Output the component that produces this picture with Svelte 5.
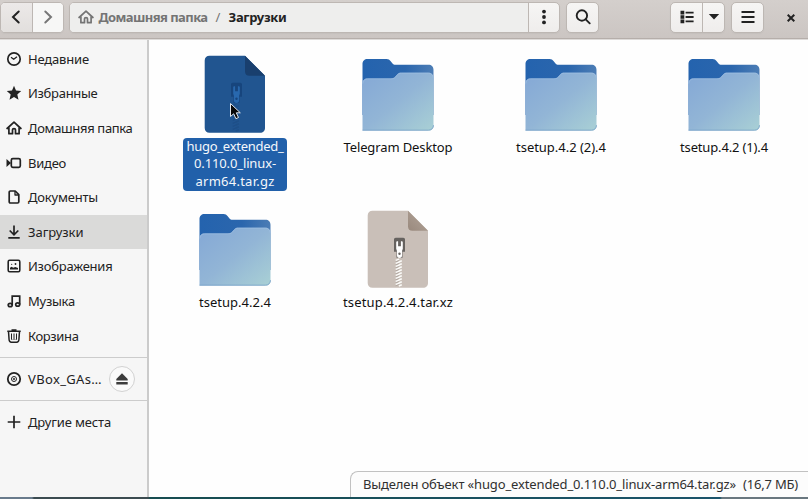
<script>
  const places = [
    { icon: 'clock', label: 'Недавние', w: 61 },
    { icon: 'star', label: 'Избранные', w: 69.5 },
    { icon: 'home', label: 'Домашняя папка', w: 104.5 },
    { icon: 'video', label: 'Видео', w: 38 },
    { icon: 'doc', label: 'Документы', w: 70 },
    { icon: 'down', label: 'Загрузки', w: 55.5, active: true },
    { icon: 'image', label: 'Изображения', w: 84.5 },
    { icon: 'music', label: 'Музыка', w: 47 },
    { icon: 'trash', label: 'Корзина', w: 50.5 }
  ];
  const files = [
    { kind: 'selected', lines: [['hugo_extended_', 97], ['0.110.0_linux-', 82], ['arm64.tar.gz', 79]] },
    { kind: 'folder', lines: [['Telegram Desktop', 109]] },
    { kind: 'folder', lines: [['tsetup.4.2 (2).4', 90]] },
    { kind: 'folder', lines: [['tsetup.4.2 (1).4', 88]] },
    { kind: 'folder', lines: [['tsetup.4.2.4', 72]] },
    { kind: 'archive', lines: [['tsetup.4.2.4.tar.xz', 110]] }
  ];

  // Tracks a label so that it fills the given width.
  function fit(node, width) {
    node.style.letterSpacing = '0px';
    const natural = node.getBoundingClientRect().width;
    const gap = (width - natural) / node.textContent.length;
    node.style.letterSpacing = gap.toFixed(3) + 'px';
  }
</script>

{#snippet glyph(name)}
  <svg class="glyph" viewBox="0 0 16 16" width="16" height="16" fill="none" stroke="currentColor" stroke-width="1.7" stroke-linejoin="round">
    {#if name === 'clock'}
      <circle cx="8" cy="8" r="6.2" stroke-width="1.7" /><path d="M5 6.300 7.700 8.300 11 5.700" stroke-width="1.300" />
    {:else if name === 'star'}
      <path d="m8 .8 2 4.700 5.200.500-3.900 3.400 1.200 5.300L8 11.900l-4.500 2.800 1.200-5.300L.8 6 6 5.500Z" fill="currentColor" stroke="none" />
    {:else if name === 'home'}
      <path d="M1.100 8.500 8 2.200l6.900 6.300" stroke-linecap="round" /><path d="M2.900 7.500v6.200h3.600V9.800c0-1.600 3-1.600 3 0v3.900h3.600V7.500" />
    {:else if name === 'video'}
      <rect x="5.300" y="3.700" width="9" height="8.600" rx="1.500" /><path d="M.5 4v8L5 8Z" fill="currentColor" stroke="none" />
    {:else if name === 'doc'}
      <path d="M3.200 3.200c0-.8.400-1.200 1.200-1.200h4.800l3.600 3.700v7.100c0 .800-.4 1.200-1.200 1.200H4.400c-.8 0-1.200-.4-1.200-1.200Z" /><path d="M9 2v4h4" stroke-width="1.300" />
    {:else if name === 'down'}
      <path d="M8 1.500v9M3.700 6.500 8 10.800l4.300-4.300M2.300 13.900h11.400" stroke-linejoin="miter" />
    {:else if name === 'image'}
      <rect x="2.200" y="2.300" width="11.600" height="11.400" rx="1.400" stroke-width="1.600" /><path d="M4 11.600V9.700l1.700-.9 1.500.9 2-.7 2.800 1v1.600Z" fill="currentColor" stroke="none" /><circle cx="9.500" cy="6" r=".9" fill="currentColor" stroke="none" /><circle cx="5.700" cy="6.300" r=".6" fill="currentColor" stroke="none" />
    {:else if name === 'music'}
      <path d="M6.200 12V3.200h7.500v8.300M6.200 3.200h7.500" stroke-linejoin="miter" /><ellipse cx="4.200" cy="12" rx="2" ry="1.700" /><ellipse cx="11.700" cy="11.500" rx="2" ry="1.700" />
    {:else if name === 'trash'}
      <path d="M1.300 3.300h13.400M5.500 1.900h5" stroke-width="1.500" /><path d="m2.500 3.500.6 8.300c.1 1.500.9 2.400 2.300 2.400h5.200c1.400 0 2.200-.9 2.300-2.400l.6-8.300" stroke-width="1.500" /><path d="M5.500 5.500v5.500l.6 1M8 5.500v6.500M10.500 5.500v5.500l-.6 1" stroke-width="1" />
    {:else if name === 'disc'}
      <circle cx="8" cy="8" r="6.200" stroke-width="1.800" /><circle cx="8" cy="8" r="2.500" stroke-width="1" /><circle cx="8" cy="8" r="1" fill="currentColor" stroke="none" />
    {:else if name === 'plus'}
      <path d="M8 1.700v12.600M1.700 8h12.600" />
    {/if}
  </svg>
{/snippet}

<div class="window">
  <header>
    <div class="group nav">
      <button class="back" aria-label="Назад"><svg width="16" height="16" viewBox="0 0 16 16"><path d="M10.700 2.500 5 8l5.700 5.500" fill="none" stroke="#222" stroke-width="2" stroke-linecap="round" /></svg></button>
      <button class="fwd" aria-label="Вперёд"><svg width="16" height="16" viewBox="0 0 16 16"><path d="M5.300 2.500 11 8l-5.700 5.500" fill="none" stroke="#777" stroke-width="2" stroke-linecap="round" /></svg></button>
    </div>
    <div class="group path">
      <div class="crumbs">
        {@render glyph('home')}
        <b class="muted" use:fit={109}>Домашняя папка</b>
        <span class="slash">/</span>
        <b class="current" use:fit={58}>Загрузки</b>
      </div>
      <button class="dots" aria-label="Действия"><svg width="6" height="16" viewBox="0 0 6 16" fill="#222"><circle cx="3" cy="2.600" r="1.900" /><circle cx="3" cy="8" r="1.900" /><circle cx="3" cy="13.400" r="1.900" /></svg></button>
    </div>
    <div class="group search">
      <button aria-label="Поиск"><svg width="16" height="16" viewBox="0 0 16 16" fill="none" stroke="#222" stroke-width="1.900"><circle cx="6.900" cy="6.500" r="5.200" /><path d="m10.700 10.300 4 4" stroke-linecap="round" /></svg></button>
    </div>
    <span class="spacer"></span>
    <div class="group view">
      <button class="list" aria-label="Список"><svg width="14" height="14" viewBox="0 0 14 14" fill="#222"><path d="M.5.800h3.800v3.600H.5zM.5 5.200h3.800v3.600H.5zM.5 9.600h3.800v3.600H.5zM5.600 1.700h8v1.800h-8zM5.600 6.100h8v1.800h-8zM5.600 10.500h8v1.800h-8z" /></svg></button>
      <button class="drop" aria-label="Вид"><svg width="12" height="6" viewBox="0 0 12 6"><path d="M.8 0h10.400L6 5.500Z" fill="#222" /></svg></button>
    </div>
    <div class="group menu">
      <button aria-label="Меню"><svg width="14" height="12" viewBox="0 0 14 12"><path d="M.5 1h13M.5 6h13M.5 11h13" stroke="#222" stroke-width="1.900" /></svg></button>
    </div>
    <svg class="close" width="8" height="8" viewBox="0 0 8 8"><path d="m.7.700 6.600 6.600M7.300.700.7 7.300" stroke="#222" stroke-width="2" /></svg>
  </header>

  <div class="body">
    <aside>
      <div class="places">
        {#each places as p}
          <div class="place" class:active={p.active}>
            {@render glyph(p.icon)}<span use:fit={p.w}>{p.label}</span>
          </div>
        {/each}
      </div>
      <div class="place mount">
        {@render glyph('disc')}<span use:fit={74}>VBox_GAs…</span>
        <div class="eject"><svg width="12" height="12" viewBox="0 0 12 12" fill="#3c3c3c"><path d="M6 .3 11.700 6v1.500H.3V6ZM.3 9h11.400v2.500H.3z" /></svg></div>
      </div>
      <div class="place other">{@render glyph('plus')}<span use:fit={83}>Другие места</span></div>
    </aside>

    <main>
      <svg class="defs" width="0" height="0">
        <linearGradient id="back" x1="0" y1="0" x2="1" y2="0"><stop offset="0" stop-color="#2463ae" /><stop offset=".6" stop-color="#2b66ad" /><stop offset="1" stop-color="#4c7db5" /></linearGradient>
        <linearGradient id="front" x1="0" y1="0" x2="1" y2="1"><stop offset="0" stop-color="#84a8d6" /><stop offset=".5" stop-color="#92b5d6" /><stop offset="1" stop-color="#a9d0d5" /></linearGradient>
        <linearGradient id="fold" x1="0" y1="1" x2="1" y2="0"><stop offset="0" stop-color="#99897d" /><stop offset="1" stop-color="#b5a79c" /></linearGradient>
      </svg>
      <div class="grid">
        {#each files as f}
          <div class="item">
            {#if f.kind === 'folder'}
              <svg width="72" height="80" viewBox="0 0 72 80">
                <path d="M.5 72V9c0-3 2-5 5-5h19c2 0 3 .7 4 2l2 2.500c.7.900 1.500 1.200 3 1.200h33c3 0 5 2 5 5V60H.5Z" fill="url(#back)" />
                <path d="M.5 75.500V28.500c0-3 2-5 5-5H29c2 0 3-.5 4.200-1.700l2-2.300c1-1.200 2-1.700 4-1.700h27.300c3 0 5 2 5 5v47.700c0 3-2 5-5 5Z" fill="url(#front)" />
                <path d="M.8 28.500c0-3 2-4.700 4.700-4.700H29c2 0 3.300-.6 4.400-1.800l2-2.300c1-1.200 2-1.600 3.800-1.600h27.300c2.700 0 4.700 2 4.700 4.700" fill="none" stroke="#a0c0e3" stroke-width=".7" />
                <path d="M.5 75.200h66c3 0 5-2 5-5" fill="none" stroke="#719dc5" stroke-width=".8" />
              </svg>
            {:else}
              {@const sel = f.kind === 'selected'}
              <svg class="file" width="62" height="80" viewBox="0 0 62 80">
                <path d="M.7 5.500C.7 2.700 2.700.700 5.500.700H41l20 20v52.300c0 2.800-2 4.800-4.800 4.800H5.500c-2.800 0-4.800-2-4.800-4.800Z" fill={sel ? '#215590' : '#c9bfb8'} />
                <path d="M41 .7 61 20.700H45.500c-3 0-4.500-1.500-4.500-4.500Z" fill={sel ? '#193f6e' : 'url(#fold)'} />
                {#each Array(9) as _, i}
                  <path d="M28.700 {50.500 + i * 3}l3.500-1.200M31.800 {52 + i * 3}l3-1.200" stroke={sel ? '#1e4f88' : '#fbfbf9'} stroke-width="1.500" />
                  <path d="M28.700 {51.600 + i * 3}l3.500-1.200" stroke={sel ? '#225894' : '#91877e'} stroke-width=".5" />
                {/each}
                <path d="M27 29.500c0-1 .7-1.700 1.700-1.700h7.600c1 0 1.700.7 1.700 1.700v12.300h-2.500v6h-6v-6H27Z" fill={sel ? '#17457d' : '#66625f'} />
                <path d="M29.200 32.500c0-.8.5-1.300 1.200-1.300h.7v5h2.800v-5h.7c.7 0 1.200.5 1.200 1.300v6.300l-.7 2v4.500c0 1.700-1 2.600-2.600 2.600s-2.600-.9-2.600-2.600v-4.500l-.7-2Z" fill={sel ? '#2868ae' : '#fff'} />
                <circle cx="32.500" cy="43.700" r="1.200" fill={sel ? '#17457d' : '#66625f'} />
              </svg>
            {/if}
            <div class="label" class:picked={f.kind === 'selected'}>
              {#each f.lines as [text, w]}<div><span use:fit={w}>{text}</span></div>{/each}
            </div>
          </div>
        {/each}
      </div>
      <svg class="cursor" width="14" height="20" viewBox="0 0 14 20"><path d="M1.500 1.500v13l3.200-2.700 2.200 4.900 2.600-1.200-2.200-4.700h4Z" fill="#080808" stroke="#e5e9ee" stroke-width="1" /></svg>
      <div class="status"><span use:fit={373}>Выделен объект «hugo_extended_0.110.0_linux-arm64.tar.gz»</span><span use:fit={55}>(16,7 МБ)</span></div>
    </main>
  </div>
  <footer></footer>
</div>

<style>
  .window { width: 808px; height: 499px; display: flex; flex-direction: column; overflow: hidden; font: 13px/18px "Noto Sans", "Open Sans", sans-serif; color: #222; background: #fefefe; white-space: nowrap; }
  header { box-sizing: border-box; height: 40px; flex: none; display: flex; align-items: flex-start; padding: 2px 13px 0 0; background: linear-gradient(#d4cfcc, #cbc5c2); border-bottom: 1px solid #dedbd9; box-shadow: inset 0 -1px #b5aeaa; }
  .group { box-sizing: border-box; height: 31px; display: flex; border: 1px solid #bdb7b3; border-radius: 5px; overflow: hidden; background: linear-gradient(#f6f5f4, #efedec); box-shadow: 0 1px 1px #aaa3; }
  button { all: unset; display: flex; flex: 1; align-items: center; justify-content: center; padding-bottom: 1px; }
  button + button, .dots { border-left: 1px solid #bdb7b3; }
  .nav { width: 64px; margin-right: 5px; }
  .back { background: linear-gradient(#ece9e8, #e2dfdd); }
  .fwd { background: #f7f7f6; }
  .path { width: 491px; margin-right: 6px; }
  .crumbs { width: 458px; display: flex; align-items: center; padding: 0 0 2px 8px; box-sizing: border-box; background: #eeeeed; color: #747474; }
  .crumbs b { display: inline-block; }
  .crumbs .muted { margin-left: 4.500px; }
  .slash { width: 21px; text-align: center; }
  .current { color: #222; }
  .search { width: 33px; }
  .spacer { flex: 1; }
  .view { width: 55px; margin-right: 6px; }
  .list { flex: 0 0 31px; }
  .menu { width: 33px; margin-right: 23px; }
  .close { margin-top: 12px; flex: none; }
  .body { display: flex; flex: 1; min-height: 0; }
  aside { box-sizing: border-box; width: 149px; flex: none; background: #f6f6f6; border-right: 2px solid #cbcbcb; }
  .places { padding: 2px 0 4px; border-bottom: 1px solid #ccc; }
  .place { height: 33.600px; margin-bottom: 1px; display: flex; align-items: center; padding-left: 6px; }
  .place > span { margin-left: 6px; }
  .active { background: #dadad9; }
  .glyph { flex: none; }
  .mount { height: 42px; margin: 0; border-bottom: 1px solid #ccc; }
  .eject { box-sizing: border-box; width: 26px; height: 26px; margin-left: 7px; border: 1px solid #d2d2d2; border-radius: 50%; background: #fafafa; display: flex; align-items: center; justify-content: center; }
  .other { height: 42px; }
  main { flex: 1; position: relative; background: #fefefe; }
  .defs { position: absolute; }
  .grid { display: grid; grid-template-columns: repeat(4, 163px); grid-auto-rows: 154.500px; padding: 15px 0 0 4.500px; }
  .item { display: flex; flex-direction: column; align-items: center; color: #111; }
  .item svg { flex: none; }
  .label { margin-top: 3px; padding: 1px 4px; text-align: center; line-height: 17.300px; }
  .label span { display: inline-block; }
  .picked { background: #2160aa; color: #f4f7fb; border-radius: 4px; padding: 0 3.500px 1px; }
  .cursor { position: absolute; left: 80px; top: 62px; }
  .status { position: absolute; right: 0; bottom: 0; box-sizing: border-box; width: 458px; height: 26px; display: flex; justify-content: space-between; align-items: center; padding: 0 10px 1px 12px; border: 1px solid #c1c1c1; border-width: 1px 0 0 1px; border-radius: 8px 0 0 0; background: #fcfcfc; color: #303030; }
  footer { height: 2px; flex: none; background: linear-gradient(90deg, #697b8c 0 32px, #3b4b50 34px 148px, #174d50 150px, #1a536a 720px, #69777f 722px); }
</style>
